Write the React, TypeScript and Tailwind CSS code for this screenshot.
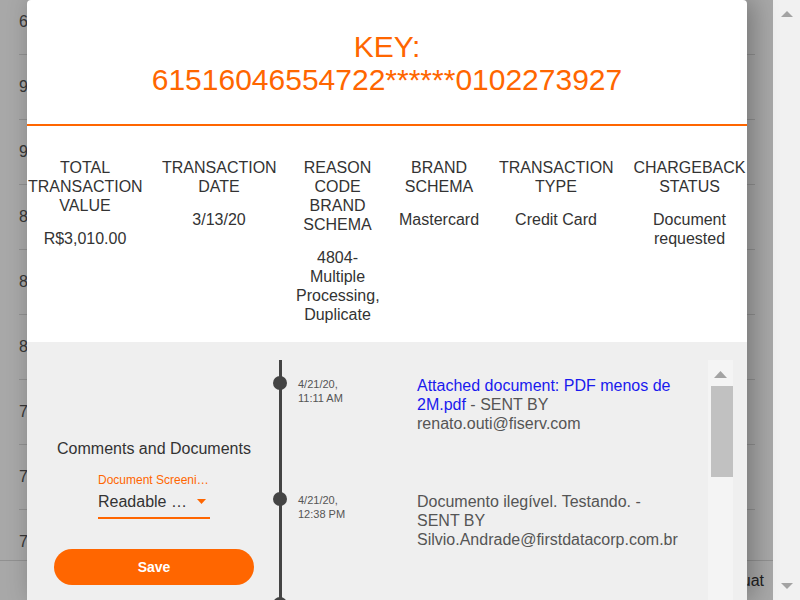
import React from "react";

const bgRows = ["6", "9", "9", "8", "8", "8", "7", "7", "7"];

const columns = [
  { title: "Total Transaction Value", value: "R$3,010.00", width: "w-[134px]" },
  { title: "Transaction Date", value: "3/13/20", width: "w-[134px]" },
  { title: "Reason Code Brand Schema", value: "4804-Multiple Processing, Duplicate", width: "w-[103px]" },
  { title: "Brand Schema", value: "Mastercard", width: "w-[100px]" },
  { title: "Transaction Type", value: "Credit Card", width: "w-[134px]" },
  { title: "Chargeback Status", value: "Document requested", width: "w-[133px]" },
];

const eventos = [
  {
    fecha: "4/21/20,",
    hora: "11:11 AM",
    link: "Attached document: PDF menos de 2M.pdf",
    texto: " - SENT BY renato.outi@fiserv.com",
    alto: "h-[116px] pt-[16px]",
  },
  {
    fecha: "4/21/20,",
    hora: "12:38 PM",
    link: "",
    texto: "Documento ilegível. Testando. - SENT BY Silvio.Andrade@firstdatacorp.com.br",
    alto: "h-[105px] pt-[16px]",
  },
  {
    fecha: "4/21/20,",
    hora: "12:40 PM",
    link: "",
    texto: "Chargeback em análise - SENT BY renato.outi@fiserv.com",
    alto: "h-[116px] pt-[30px]",
  },
];

const App: React.FC = () => {
  return (
    <div className="flex h-[600px] w-[800px] overflow-hidden bg-white font-['Liberation_Sans',Arial,sans-serif]">
      {/* pagina de fondo */}
      <div className="relative h-full w-[773px]">
        <div className="mt-[-10px] ml-[19px] w-[736px]">
          {bgRows.map((n, i) => (
            <div key={i} className="flex h-[65px] items-center border-b border-[#dddddd] text-[16px] text-[#555]">
              {n}
            </div>
          ))}
        </div>
        <div className="absolute bottom-0 left-0 right-0 flex h-[40px] items-center justify-end border-t border-[#dddddd] bg-white pr-[9px] text-[16px] text-[#333]">
          Ambiente: uat
        </div>

        {/* overlay + modal */}
        <div className="absolute inset-0 flex bg-[rgba(0,0,0,0.34)] pl-[27px]">
          <div className="flex h-[600px] w-[720px] flex-col overflow-hidden rounded-t-[4px] bg-white shadow-[6px_0_26px_rgba(0,0,0,0.3)]">
            <div className="border-b-2 border-[#ff6600] pt-[30px] pb-[28px] text-center text-[30px] leading-[33px] text-[#ff6600]">
              <div>KEY:</div>
              <div>61516046554722******0102273927</div>
            </div>

            <div className="flex justify-center pt-[32px] pb-[18px] text-[16px] leading-[19px] text-[#333]">
              {columns.map((c) => (
                <div key={c.title} className={`${c.width} shrink-0 px-[10px] text-center`}>
                  <div className="uppercase">{c.title}</div>
                  <div className="mt-[14px]">{c.value}</div>
                </div>
              ))}
            </div>

            <div className="flex flex-1 bg-[#efefef] pr-[14px]">
              <div className="flex w-[252px] shrink-0 flex-col items-center pt-[97px] pl-[2px]">
                <div className="text-[16px] leading-[19px] text-[#333]">Comments and Documents</div>
                <div className="mt-[15px] w-[112px]">
                  <div className="text-[12px] leading-[14px] whitespace-nowrap text-[#ff6600]">Document Screeni…</div>
                  <div className="mt-[5px] flex items-center justify-between border-b-2 border-[#ff6600] pr-[4px] pb-[6px]">
                    <span className="text-[16px] leading-[19px] text-[#333]">Readable …</span>
                    <svg width="9" height="5" viewBox="0 0 9 5">
                      <path d="M0 0h9L4.5 5z" fill="#ff6600" />
                    </svg>
                  </div>
                </div>
                <button className="mt-[30px] h-[36px] w-[200px] rounded-full bg-[#ff6600] text-[14px] font-bold text-white">
                  Save
                </button>
              </div>

              <div className="mt-[18px] flex-1 border-l-[3px] border-[#444]">
                {eventos.map((e, i) => (
                  <div key={i} className={`relative flex ${e.alto} pl-[16px]`}>
                    <span className="absolute top-[16px] left-[-9px] h-[14px] w-[14px] rounded-full bg-[#444]" />
                    <div className="mt-[2px] w-[119px] text-[11px] leading-[13.5px] text-[#555]">
                      <div>{e.fecha}</div>
                      <div>{e.hora}</div>
                    </div>
                    <div className="w-[266px] text-[16px] leading-[19px] text-[#555]">
                      {e.link && <span className="text-[#1a1aee]">{e.link}</span>}
                      {e.texto}
                    </div>
                  </div>
                ))}
              </div>

              {/* barra de scroll interna */}
              <div className="mt-[18px] w-[25px] shrink-0 bg-[#f4f4f4]">
                <div className="mt-[11px] flex justify-center">
                  <svg width="13" height="7" viewBox="0 0 13 7">
                    <path d="M6.5 0L13 7H0z" fill="#a3a3a3" />
                  </svg>
                </div>
                <div className="mt-[8px] ml-[3px] h-[91px] w-[22px] bg-[#c1c1c1]" />
              </div>
            </div>
          </div>
        </div>
      </div>

      {/* barra de scroll de la pagina */}
      <div className="flex h-full w-[27px] flex-col items-center justify-between bg-[#f1f1f1] py-[11px]">
        <svg width="12" height="6" viewBox="0 0 12 6">
          <path d="M6 0L12 6H0z" fill="#a3a3a3" />
        </svg>
        <svg width="12" height="6" viewBox="0 0 12 6">
          <path d="M0 0h12L6 6z" fill="#a3a3a3" />
        </svg>
      </div>
    </div>
  );
};

export default App;
